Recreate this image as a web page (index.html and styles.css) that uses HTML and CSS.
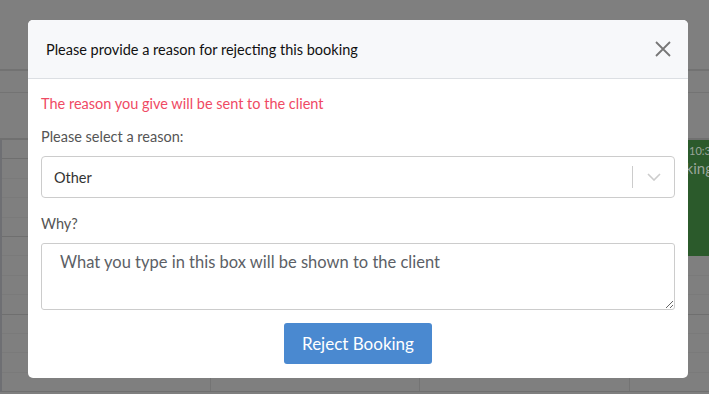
FILE: index.html
```html
<!DOCTYPE html>
<html lang="en">
  <head>
    <meta charset="UTF-8" />
    <meta name="viewport" content="width=device-width, initial-scale=1.0" />
    <title>Reject Booking</title>
    <link rel="stylesheet" href="styles.css">
  </head>
  <body>
    <!-- calendar behind the overlay -->
    <div class="calendar">
      <div class="cal-head"></div>
      <div class="cal-allday"></div>
      <div class="cal-top"></div>
      <div class="cal-slots">
        <div class="slot hour"></div><div class="slot"></div><div class="slot"></div><div class="slot"></div>
        <div class="slot hour"></div><div class="slot"></div><div class="slot"></div><div class="slot"></div>
        <div class="slot hour"></div><div class="slot"></div><div class="slot"></div><div class="slot"></div>
        <div class="slot hour"></div>
      </div>
      <div class="event">
        <div class="event-time">10:30</div>
        <div class="event-title">Booking</div>
      </div>
    </div>

    <div class="overlay">
      <div class="modal">
        <div class="modal-header">
          <h4 class="modal-title">Please provide a reason for rejecting this booking</h4>
          <button class="close" type="button" aria-label="Close">
            <svg width="18" height="18" viewBox="0 0 18 18">
              <path d="M2 2 L16 16 M16 2 L2 16" stroke="#777" stroke-width="1.8" fill="none" />
            </svg>
          </button>
        </div>
        <div class="modal-body">
          <p class="warning">The reason you give will be sent to the client</p>
          <label class="field-label">Please select a reason:</label>
          <div class="select">
            <span class="select-value">Other</span>
            <span class="select-sep"></span>
            <svg class="select-arrow" width="14" height="8" viewBox="0 0 14 8">
              <path d="M1 1 L7 7 L13 1" stroke="#ccc" stroke-width="1.6" fill="none" />
            </svg>
          </div>
          <label class="field-label">Why?</label>
          <textarea class="reason" placeholder="What you type in this box will be shown to the client"></textarea>
          <div class="actions">
            <button class="btn-primary" type="button">Reject Booking</button>
          </div>
        </div>
      </div>
    </div>
  </body>
</html>
```

FILE: styles.css
```css
body {
  margin: 0;
  font-family: "Lato", "Open Sans", sans-serif;
  font-size: 14.5px;
  color: #555;
  background: #7f7f7f;
  height: 394px;
  overflow: hidden;
}
.calendar {
  position: absolute;
  inset: 0;
  background: #7f7f7f;
}
.cal-head {
  height: 69px;
  border-bottom: 2px solid #727272;
}
.cal-allday {
  height: 21px;
  border-bottom: 1px solid #737373;
}
.cal-top {
  height: 45px;
  border-bottom: 2px solid #707070;
}
.cal-slots {
  border-left: 2px solid #6e6f73;
  background: linear-gradient(to right, transparent 208px, #747474 208px, #747474 209px, transparent 209px, transparent 417px, #747474 417px, #747474 418px, transparent 418px, transparent 627px, #747474 627px, #747474 628px, transparent 628px);
}
.slot {
  height: 18.4px;
  border-bottom: 1px solid #7a7a7a;
}
.slot.hour {
  border-bottom: 1px solid #6f6f6f;
}
.event {
  position: absolute;
  left: 660px;
  top: 140px;
  width: 60px;
  height: 116px;
  background: #2b5a2b;
  padding: 4px 0 0 29px;
  box-sizing: border-box;
  color: #9aa59a;
  overflow: hidden;
}
.event-time {
  font-size: 11px;
}
.event-title {
  font-size: 15px;
  margin-top: 2px;
  margin-left: -30px;
}
.overlay {
  position: absolute;
  inset: 0;
  padding: 20px 21px 0 28px;
}
.modal {
  background: #fff;
  border-radius: 5px;
  width: 660px;
  overflow: hidden;
}
.modal-header {
  background: #f7f8fa;
  border-bottom: 1px solid #dcdfe3;
  height: 58px;
  display: flex;
  align-items: center;
  justify-content: space-between;
  padding: 0 16px 0 18px;
}
.modal-title {
  margin: 0;
  font-size: 14.5px;
  font-weight: normal;
  color: #111;
}
.close {
  border: 0;
  background: none;
  padding: 0;
  width: 18px;
  height: 18px;
  cursor: pointer;
}
.modal-body {
  padding: 15px 13px 14px 13px;
}
.warning {
  margin: 0 0 13px;
  color: #ef4a64;
  line-height: 20px;
}
.field-label {
  display: block;
  line-height: 20px;
  margin-bottom: 9px;
}
.select {
  height: 42px;
  box-sizing: border-box;
  border: 1px solid #ccc;
  border-radius: 4px;
  display: flex;
  align-items: center;
  padding: 0 13px 0 12px;
  margin-bottom: 16px;
}
.select-value {
  flex: 1;
  color: #333;
}
.select-sep {
  width: 1px;
  height: 22px;
  background: #ccc;
  margin-right: 14px;
}
.reason {
  display: block;
  width: 100%;
  height: 67px;
  box-sizing: border-box;
  border: 1px solid #ccc;
  border-radius: 3px;
  padding: 8px 18px;
  font-family: inherit;
  font-size: 16.5px;
  color: #555;
  margin: 0 0 13px;
}
.reason::placeholder {
  color: #5c5f66;
}
.actions {
  text-align: center;
}
.btn-primary {
  background: #4a89d0;
  border: 0;
  border-radius: 3px;
  color: #fff;
  font-family: inherit;
  font-size: 17px;
  width: 148px;
  height: 41px;
}
```
